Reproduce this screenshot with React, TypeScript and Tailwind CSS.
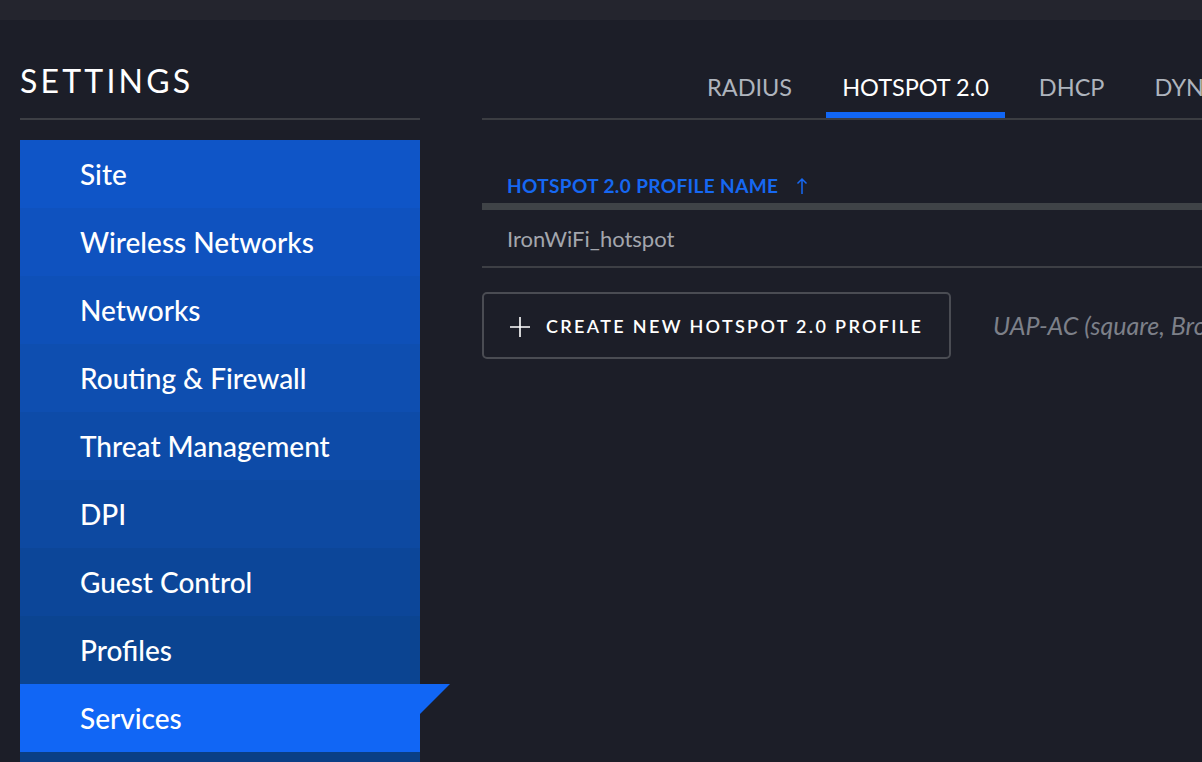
const navItems = [
  { label: "Site", bg: "bg-[#0f55c7]" },
  { label: "Wireless Networks", bg: "bg-[#0f52bf]" },
  { label: "Networks", bg: "bg-[#0e50b8]" },
  { label: "Routing & Firewall", bg: "bg-[#0e4eb0]" },
  { label: "Threat Management", bg: "bg-[#0d4ba8]" },
  { label: "DPI", bg: "bg-[#0d49a1]" },
  { label: "Guest Control", bg: "bg-[#0c4699]" },
  { label: "Profiles", bg: "bg-[#0b4491]" },
];

const tabs = ["RADIUS", "HOTSPOT 2.0", "DHCP", "DYNAMIC DNS"];

const Sidebar = () => (
  <aside className="w-[400px] shrink-0">
    <h1 className="mt-[41px] text-[32px] leading-[40px] tracking-[0.1em] text-white">SETTINGS</h1>
    <div className="mt-[17px] h-[2px] bg-[#3d3f45]" />
    <nav className="mt-[20px]">
      {navItems.map((item) => (
        <div
          key={item.label}
          className={`${item.bg} flex h-[68px] items-center pl-[60px] text-[28px] font-medium text-white`}
        >
          {item.label}
        </div>
      ))}
      <div className="relative flex h-[68px] items-center bg-[#1166f5] pl-[60px] text-[28px] font-medium text-white">
        Services
        <svg className="absolute left-full top-0" width="30" height="30" viewBox="0 0 30 30">
          <polygon points="0,0 30,0 0,30" fill="#1166f5" />
        </svg>
      </div>
      <div className="h-[68px] bg-[#0a3f86]" />
    </nav>
  </aside>
);

const Main = () => (
  <main className="ml-[62px] min-w-0 flex-1">
    <div className="mt-[55px] flex gap-[18px] whitespace-nowrap pl-[209px]">
      {tabs.map((tab) => {
        const active = tab === "HOTSPOT 2.0";
        return (
          <div
            key={tab}
            className={`border-b-[6px] px-4 pb-[13px] text-[23.5px] leading-[24px] ${
              active ? "border-[#1166f5] text-white" : "border-transparent text-[#aeb4bd]"
            }`}
          >
            {tab}
          </div>
        );
      })}
    </div>
    <div className="h-[2px] bg-[#3b3d42]" />

    <div className="mt-[54px] flex items-center pl-[25px] text-[19px] font-bold leading-[24px] tracking-[0.02em] text-[#1668f2]">
      HOTSPOT 2.0 PROFILE NAME
      <svg className="ml-[18px]" width="12" height="18" viewBox="0 0 12 18" fill="none" stroke="#1668f2" strokeWidth="1.5">
        <path d="M6 17V2M1.5 6.5 6 2l4.5 4.5" />
      </svg>
    </div>
    <div className="mt-[5px] h-[7px] bg-[#3f4347]" />

    <div className="pl-[25px] pt-[17px] pb-[15px] text-[22px] leading-[24px] text-[#a3a6ad]">IronWiFi_hotspot</div>
    <div className="h-[2px] bg-[#3d3f45]" />

    <div className="mt-[24px] flex items-center whitespace-nowrap">
      <button className="flex h-[67px] w-[469px] shrink-0 items-center rounded-[5px] border-2 border-[#4a4c53] pl-[26px] pt-[2px] text-[18px] font-semibold tracking-[0.13em] text-white">
        <svg className="mr-[16px]" width="20" height="20" viewBox="0 0 20 20" fill="none" stroke="#ffffff" strokeWidth="1.6">
          <path d="M10 0v20M0 10h20" />
        </svg>
        CREATE NEW HOTSPOT 2.0 PROFILE
      </button>
      <span className="ml-[42px] text-[25px] italic text-[#7d8089]">UAP-AC (square, Broadcom)</span>
    </div>
  </main>
);

export default function App() {
  return (
    <div
      className="h-[762px] w-[1202px] overflow-hidden bg-[#1c1e28]"
      style={{ fontFamily: "Lato, 'Open Sans', sans-serif" }}
    >
      <div className="h-[20px] bg-[#24252e]" />
      <div className="flex pl-[20px]">
        <Sidebar />
        <Main />
      </div>
    </div>
  );
}
